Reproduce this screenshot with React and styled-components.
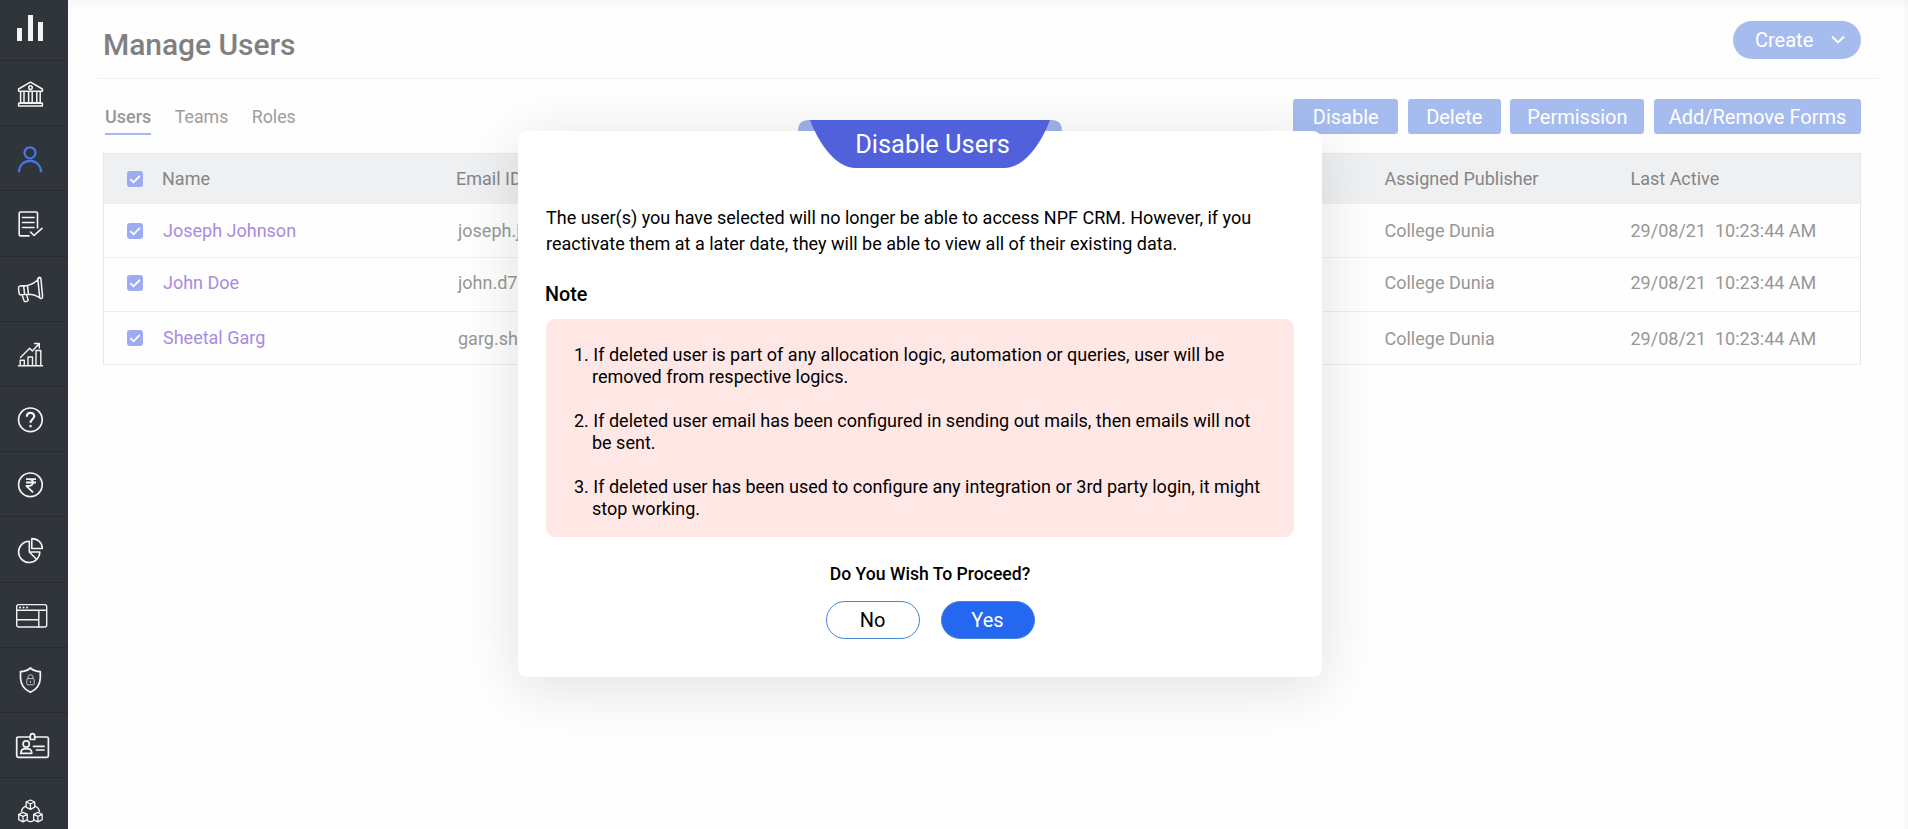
import React from "react";
import styled, { createGlobalStyle, css } from "styled-components";

const GlobalStyle = createGlobalStyle`
  * { box-sizing: border-box; }
  body {
    margin: 0;
    background: #fefefe;
    font-family: Roboto, "Liberation Sans", sans-serif;
    overflow: hidden;
  }
`;

const Shell = styled.div`
  display: flex;
  width: 100%;
  height: 829px;
  overflow: hidden;
  position: relative;
`;

const Sidebar = styled.nav`
  width: 68px;
  flex: none;
  background: #30353b;
`;

const NavItem = styled.a`
  display: flex;
  align-items: center;
  height: ${(p) => (p.$first ? 61 : 65.2)}px;
  padding: ${(p) => (p.$first ? "0 0 4px 15px" : "1px 0 0 15px")};
  border-bottom: 1px solid #282c31;
  color: ${(p) => (p.$active ? "#4377e6" : "#f4f4f4")};
`;

const Glyph = styled.svg`
  width: 36px;
  height: 34px;
  fill: none;
  stroke: currentColor;
  stroke-width: ${(p) => p.$weight || 1.4};
  stroke-linecap: round;
  stroke-linejoin: round;
`;

const Page = styled.main`
  flex: 1;
  padding: 0 30px;
  background: linear-gradient(#f8f8f8, #fefefe 12px);
  box-shadow: inset -8px 0 8px -8px rgba(0, 0, 0, 0.06);
`;

const Header = styled.header`
  display: flex;
  justify-content: space-between;
  align-items: flex-start;
  height: 79px;
  padding: 21px 17px 0 5px;
  border-bottom: 1px solid #efefef;
`;

const Title = styled.h1`
  margin: 6px 0 0;
  font-size: 30px;
  line-height: 36px;
  font-weight: 500;
  letter-spacing: -0.05px;
  color: #808080;
`;

const CreateButton = styled.button`
  display: flex;
  align-items: center;
  justify-content: space-between;
  width: 128px;
  height: 38px;
  padding: 0 16px 0 22px;
  border: 0;
  border-radius: 19px;
  background: #a6bcef;
  color: #fff;
  font: 400 20px Roboto, sans-serif;
`;

const Toolbar = styled.div`
  display: flex;
  justify-content: space-between;
  padding: 20px 17px 0 7px;
  height: 74px;
`;

const Tabs = styled.div`
  display: flex;
  gap: 23.4px;
  padding-top: 7px;
`;

const Tab = styled.a`
  height: 29px;
  font-size: ${(p) => (p.$active ? 18 : 17.8)}px;
  line-height: 22px;
  color: ${(p) => (p.$active ? "#979797" : "#9d9d9d")};
  font-weight: ${(p) => (p.$active ? 500 : 400)};
  border-bottom: ${(p) => (p.$active ? "2px solid #a3bbf0" : "0")};
`;

const Actions = styled.div`
  display: flex;
  gap: 9.6px;
`;

const ActionButton = styled.button`
  width: ${(p) => p.$w}px;
  height: 35px;
  padding: 0;
  border: 0;
  border-radius: 3px;
  background: #a6bcef;
  color: #fff;
  font: 400 20px Roboto, sans-serif;
`;

const Table = styled.section`
  margin: 0 17px 0 5px;
  border: 1px solid #e5e6e8;
  border-bottom-color: #efefef;
`;

const rowGrid = css`
  display: grid;
  grid-template-columns: 35px 294px 928.5px 246px 1fr;
  align-items: center;
  padding-left: 23px;
`;

const HeadRow = styled.div`
  ${rowGrid}
  height: 50px;
  background: #eff0f2;
  color: #858585;
  font-size: 18px;
`;

const Row = styled.div`
  ${rowGrid}
  height: ${(p) => p.$h}px;
  padding-bottom: ${(p) => p.$lift || 0}px;
  color: #979797;
  font-size: 18px;
  & + & { border-top: 1px solid #efefef; }
`;

const Cell = styled.span`
  white-space: pre;
  line-height: 22px;
  padding-left: ${(p) => p.$indent || 0}px;
  padding-top: ${(p) => p.$drop || 0}px;
`;

const NameLink = styled.a`
  color: #a88be0;
  line-height: 22px;
  padding-left: 1px;
`;

const CheckBox = styled.span`
  display: flex;
  width: 16px;
  height: 16px;
  border-radius: 3px;
  background: #9dabf2;
`;

const Modal = styled.div`
  position: absolute;
  left: 518px;
  top: 131px;
  width: 804px;
  height: 546px;
  padding: 74px 28px 0;
  border-radius: 9px;
  background: #fff;
  box-shadow: 0 10px 60px rgba(0, 0, 0, 0.12);
  color: #000;
`;

const Ribbon = styled.div`
  position: absolute;
  left: 280px;
  top: -11px;
  width: 264px;
  height: 48px;
`;

const RibbonShape = styled.svg`
  position: absolute;
  inset: 0;
`;

const RibbonTitle = styled.h2`
  position: relative;
  margin: 0;
  padding-left: 5px;
  text-align: center;
  font-size: 25.4px;
  line-height: 48px;
  font-weight: 400;
  color: #fff;
`;

const Lead = styled.p`
  margin: 0;
  font-size: 18px;
  line-height: 26px;
  white-space: nowrap;
`;

const NoteTitle = styled.h3`
  margin: 26px 0 13px -1px;
  font-size: 19.8px;
  line-height: 23px;
  font-weight: 500;
`;

const NoteBox = styled.div`
  display: flex;
  flex-direction: column;
  gap: 22px;
  width: 748px;
  height: 218px;
  padding: 25px 0 0 28px;
  border-radius: 9px;
  background: #ffe7e6;
`;

const NoteItem = styled.div`
  font-size: 18px;
  line-height: 22px;
  white-space: nowrap;
  padding-left: 18px;
  text-indent: -18px;
`;

const Footer = styled.div`
  display: flex;
  flex-direction: column;
  align-items: center;
  padding: 26px 0 0 20px;
`;

const Question = styled.div`
  font-size: 17.6px;
  line-height: 22px;
  font-weight: 500;
`;

const Choices = styled.div`
  display: flex;
  gap: 21px;
  margin-top: 16px;
`;

const Choice = styled.button`
  width: 94px;
  height: 38px;
  padding: 0;
  border: 1px solid #4a86d8;
  border-radius: 19px;
  background: ${(p) => (p.$primary ? "#2468f2" : "#fff")};
  color: ${(p) => (p.$primary ? "#fff" : "#000")};
  font: 400 20px Roboto, sans-serif;
`;

const Icon = ({ weight, children }) => (
  <Glyph viewBox="0 0 36 34" $weight={weight}>{children}</Glyph>
);

const Cube = ({ x, y }) => (
  <path
    transform={`translate(${x} ${y})`}
    d="M0-4.6L4.3-2.6V2.6L0 4.8L-4.3 2.6V-2.6ZM-4.3-2.6L0-.6L4.3-2.6M0-.6V4.8"
  />
);

const navIcons = [
  { id: "dashboard", art: <Icon><path fill="currentColor" stroke="none" d="M2 17h5v13H2zM13 4h5v26h-5zM23 11h5v19h-5z" /></Icon> },
  { id: "institute", art: (
    <Icon weight={1.5}>
      <path d="M3.6 12L15.5 5.2L27.4 12V14.3H3.6ZM5.6 14.5V25.5M9 14.5V25.5M13.6 14.5V25.5M17.2 14.5V25.5M21.8 14.5V25.5M25.2 14.5V25.5M5 25.8H26M3.6 26.2H27.4V29H3.6Z" />
      <circle cx="15.5" cy="10.6" r="1.8" />
    </Icon>) },
  { id: "users", active: true, art: (
    <Icon weight={2.3}><circle cx="15" cy="10.8" r="5.5" /><path strokeLinecap="butt" d="M4 30.2C4 15.2 26 15.2 26 30.2" /></Icon>) },
  { id: "applications", art: (
    <Icon weight={1.6}>
      <path d="M22.5 21V6.3Q22.5 5 21.2 5H5.5Q4.2 5 4.2 6.3V27.5Q4.2 28.9 5.5 28.9H14M7.5 10.5H19M7.5 15.5H19M7.5 20.5H19M15.5 25L19 28.5L27 21.3" />
    </Icon>) },
  { id: "marketing", art: (
    <Icon weight={1.5}>
      <path transform="translate(0 .6)" d="M4 14Q3.2 15 3.7 17.5L4.2 21Q4.4 22.3 5.5 22.2L13.5 21.7L12.4 12.8L4.8 13.4ZM8.7 13.2L9.6 22M12.4 12.8Q19.5 11.5 24 5.5M13.5 21.7Q20 21.8 25.6 25.8M22.8 6.2Q22.8 5 24.2 4.8Q25.5 4.6 25.9 6L27.6 24Q27.6 25.7 26.4 26Q25 26.1 24.7 24.8ZM7 22.1L9 28Q9.4 29.3 10.7 29L12.6 28.4Q13.5 28 13 26.8L11.5 22" />
    </Icon>) },
  { id: "analytics", art: (
    <Icon>
      <path d="M3.5 28.8H27.5M5.2 28.5V23.2H9.3V28.5M13 28.5V20H17.5V28.5M21 28.5V13.5H25.8V28.5M5.5 20.5L14.7 11.3L17.3 14L24 6.7M19.5 6.5H24.3V11" />
    </Icon>) },
  { id: "queries", art: (
    <Icon weight={1.7}>
      <circle cx="15.4" cy="16.8" r="11.8" />
      <path strokeWidth="2.2" strokeLinecap="butt" d="M11.8 13.7C11.8 8.5 19.2 8.7 19.2 13.3C19.2 16.1 15.5 16.5 15.5 19.7M15.5 21.9V24.3" />
    </Icon>) },
  { id: "payments", art: (
    <Icon weight={1.7}>
      <circle cx="15.4" cy="16.8" r="11.8" />
      <path strokeWidth="1.8" strokeLinecap="butt" d="M11 11.1H21M11 14.5H21M11 11.1H14Q18 11.3 18 14.5Q17.8 17.8 14 17.9H11.3L18 24.3" />
    </Icon>) },
  { id: "reports", art: (
    <Icon weight={1.6}>
      <path d="M14.3 8.3A10.6 10.6 0 1 0 24.8 19H14.3ZM14.3 19L21.8 26.5M16.8 5.6V15.5H27.3C27.3 9.8 22.8 5.6 16.8 5.6Z" />
    </Icon>) },
  { id: "forms", art: (
    <Icon>
      <rect x="1.7" y="6.6" width="30" height="22.4" rx="2" />
      <path d="M1.7 12.3H31.7M23.8 12.5V29M1.7 21.7H23.8" />
      <path strokeWidth="1.9" d="M5 9.5h.1M8.5 9.5h.1M12 9.5h.1" />
    </Icon>) },
  { id: "security", art: (
    <Icon weight={1.7}>
      <path d="M15.4 5Q19.5 8.5 25.3 8.7V15Q25 25 15.4 29.3Q5.9 25 5.5 15V8.7Q11.3 8.5 15.4 5Z" />
      <g strokeWidth="1" opacity=".75"><rect x="11.8" y="15.6" width="7.4" height="6.2" rx="1" /><path d="M13.1 15.4V13.8Q13.2 11.8 15.5 11.8Q17.8 11.8 17.9 13.8V15.4M15.5 18.2V19.5" /></g>
    </Icon>) },
  { id: "profile", art: (
    <Icon weight={1.7}>
      <path d="M15 9H3.3Q1.7 9 1.7 10.6V27.8Q1.7 29.3 3.3 29.3H31.8Q33.4 29.3 33.4 27.8V10.6Q33.4 9 31.8 9H20M15.3 8Q15.3 5.6 17.5 5.6Q19.7 5.6 19.7 8V11.5H15.3ZM18.5 18.4H29M21.5 22H29" />
      <circle cx="11.2" cy="16" r="3.1" /><path d="M5.8 25.4Q6 20.6 9.8 20.8H12.6Q16.6 20.6 16.8 25.4Z" />
    </Icon>) },
  { id: "integrations", art: (
    <Icon weight={1.3}>
      <Cube x={15.4} y={10.6} /><Cube x={8} y={23} /><Cube x={22.9} y={23} />
      <path d="M10.7 12Q7.2 13.5 6.4 17.3M20.1 12Q23.6 13.5 24.5 17.3M12.5 26.8Q15.5 28.6 18.5 26.8" />
    </Icon>) },
];

const users = [
  { name: "Joseph Johnson", email: "joseph.j", h: 53, lift: 0 },
  { name: "John Doe", email: "john.d7", h: 54, lift: 4 },
  { name: "Sheetal Garg", email: "garg.sh", h: 53, lift: 0, drop: 2 },
];

const notes = [
  ["1. If deleted user is part of any allocation logic, automation or queries, user will be", "removed from respective logics."],
  ["2. If deleted user email has been configured in sending out mails, then emails will not", "be sent."],
  ["3. If deleted user has been used to configure any integration or 3rd party login, it might", "stop working."],
];

const actions = [["Disable", 105], ["Delete", 93], ["Permission", 134], ["Add/Remove Forms", 207]];

const Checked = () => (
  <CheckBox>
    <svg width="16" height="16" fill="none" stroke="#fff" strokeWidth="1.8"><path d="M3.3 8.2L6.5 11.3L12.8 5" /></svg>
  </CheckBox>
);

export default function App() {
  return (
    <Shell>
      <GlobalStyle />
      <Sidebar>
        {navIcons.map((n, i) => (
          <NavItem key={n.id} $first={i === 0} $active={n.active}>{n.art}</NavItem>
        ))}
      </Sidebar>
      <Page>
        <Header>
          <Title>Manage Users</Title>
          <CreateButton>
            Create
            <svg width="14" height="10" fill="none" stroke="#fff" strokeWidth="1.8"><path d="M1 1.5L7 7.5L13 1.5" /></svg>
          </CreateButton>
        </Header>
        <Toolbar>
          <Tabs>
            <Tab $active>Users</Tab>
            <Tab>Teams</Tab>
            <Tab>Roles</Tab>
          </Tabs>
          <Actions>
            {actions.map(([label, w]) => <ActionButton key={label} $w={w}>{label}</ActionButton>)}
          </Actions>
        </Toolbar>
        <Table>
          <HeadRow>
            <Checked />
            <Cell>Name</Cell>
            <Cell>Email ID</Cell>
            <Cell>Assigned Publisher</Cell>
            <Cell>Last Active</Cell>
          </HeadRow>
          {users.map((u) => (
            <Row key={u.name} $h={u.h} $lift={u.lift}>
              <Checked />
              <NameLink>{u.name}</NameLink>
              <Cell $indent={2} $drop={u.drop}>{u.email}</Cell>
              <Cell $drop={u.drop}>College Dunia</Cell>
              <Cell $drop={u.drop}>{"29/08/21  10:23:44 AM"}</Cell>
            </Row>
          ))}
        </Table>
      </Page>
      <Modal>
        <Ribbon>
          <RibbonShape width="264" height="48">
            <path fill="#9aabe2" d="M0 11Q0 0 11 0H253Q264 0 264 11Z" />
            <path fill="#5061db" d="M12 0H252C243 24 226 48 206 48H58C38 48 21 24 12 0Z" />
          </RibbonShape>
          <RibbonTitle>Disable Users</RibbonTitle>
        </Ribbon>
        <Lead>
          The user(s) you have selected will no longer be able to access NPF CRM. However, if you<br />
          reactivate them at a later date, they will be able to view all of their existing data.
        </Lead>
        <NoteTitle>Note</NoteTitle>
        <NoteBox>
          {notes.map(([a, b]) => <NoteItem key={a}>{a}<br />{b}</NoteItem>)}
        </NoteBox>
        <Footer>
          <Question>Do You Wish To Proceed?</Question>
          <Choices>
            <Choice>No</Choice>
            <Choice $primary>Yes</Choice>
          </Choices>
        </Footer>
      </Modal>
    </Shell>
  );
}
